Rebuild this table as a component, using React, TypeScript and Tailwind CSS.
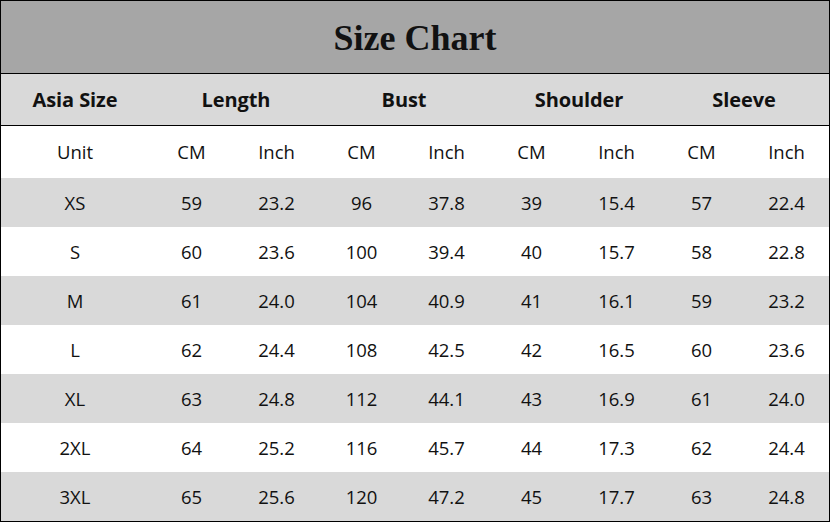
import React from "react";

const rows: string[][] = [
  ["XS", "59", "23.2", "96", "37.8", "39", "15.4", "57", "22.4"],
  ["S", "60", "23.6", "100", "39.4", "40", "15.7", "58", "22.8"],
  ["M", "61", "24.0", "104", "40.9", "41", "16.1", "59", "23.2"],
  ["L", "62", "24.4", "108", "42.5", "42", "16.5", "60", "23.6"],
  ["XL", "63", "24.8", "112", "44.1", "43", "16.9", "61", "24.0"],
  ["2XL", "64", "25.2", "116", "45.7", "44", "17.3", "62", "24.4"],
  ["3XL", "65", "25.6", "120", "47.2", "45", "17.7", "63", "24.8"],
];

const unit = ["Unit", "CM", "Inch", "CM", "Inch", "CM", "Inch", "CM", "Inch"];

export default function App() {
  return (
    <div className="w-[830px] h-[522px] box-border border border-black bg-white text-[#111] overflow-hidden">
      <div className="h-[73px] bg-[#a6a6a6] border-b border-black flex items-center justify-center">
        <span className="font-['Liberation_Serif',serif] font-bold text-[36px] leading-none pt-[2px]">
          Size Chart
        </span>
      </div>
      <div className="h-[52px] bg-[#d9d9d9] border-b border-black grid grid-cols-[148px_repeat(4,170px)] items-center font-['Open_Sans',sans-serif] font-bold text-[20px] tracking-[-0.1px]">
        <div className="text-center">Asia Size</div>
        <div className="text-center pl-[4px]">Length</div>
        <div className="text-center">Bust</div>
        <div className="text-center pl-[10px]">Shoulder</div>
        <div className="text-center">Sleeve</div>
      </div>
      <div className="font-['Open_Sans',sans-serif] text-[18.5px]">
        <div className="h-[52px] grid grid-cols-[148px_repeat(8,85px)] items-center bg-white">
          {unit.map((u, i) => (
            <div key={i} className="text-center">
              {u}
            </div>
          ))}
        </div>
        {rows.map((r, ri) => (
          <div
            key={ri}
            className={
              "h-[49px] grid grid-cols-[148px_repeat(8,85px)] items-center " +
              (ri % 2 === 0 ? "bg-[#d9d9d9]" : "bg-white")
            }
          >
            {r.map((c, ci) => (
              <div key={ci} className="text-center">
                {c}
              </div>
            ))}
          </div>
        ))}
      </div>
    </div>
  );
}
